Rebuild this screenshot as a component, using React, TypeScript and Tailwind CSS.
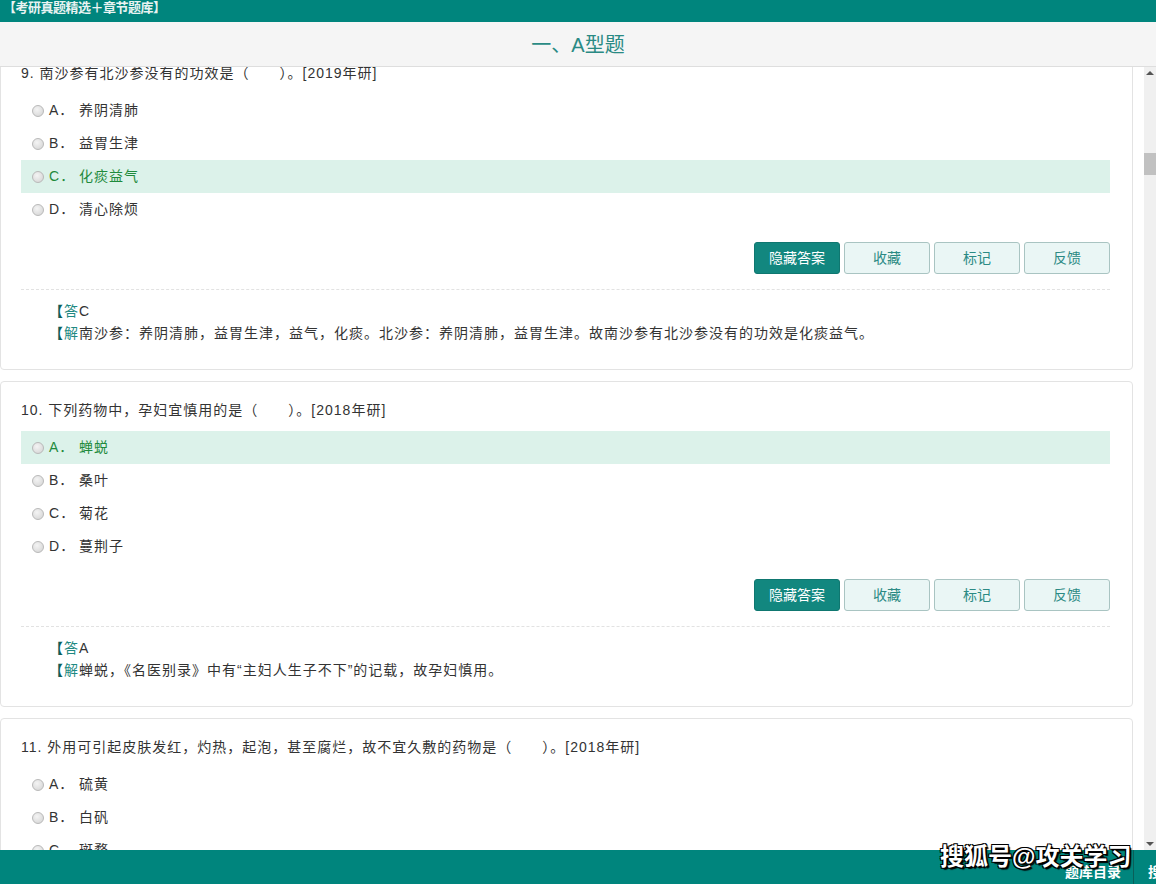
import React from "react";

type Q = {
  no: string;
  text: string;
  options: { k: string; t: string }[];
  correct: number;
  answer?: string;
  explain?: string;
};

const questions: Q[] = [
  {
    no: "9.",
    text: "南沙参有北沙参没有的功效是（　　）。[2019年研]",
    options: [
      { k: "A", t: "养阴清肺" },
      { k: "B", t: "益胃生津" },
      { k: "C", t: "化痰益气" },
      { k: "D", t: "清心除烦" },
    ],
    correct: 2,
    answer: "C",
    explain:
      "南沙参：养阴清肺，益胃生津，益气，化痰。北沙参：养阴清肺，益胃生津。故南沙参有北沙参没有的功效是化痰益气。",
  },
  {
    no: "10.",
    text: "下列药物中，孕妇宜慎用的是（　　）。[2018年研]",
    options: [
      { k: "A", t: "蝉蜕" },
      { k: "B", t: "桑叶" },
      { k: "C", t: "菊花" },
      { k: "D", t: "蔓荆子" },
    ],
    correct: 0,
    answer: "A",
    explain: "蝉蜕，《名医别录》中有“主妇人生子不下”的记载，故孕妇慎用。",
  },
  {
    no: "11.",
    text: "外用可引起皮肤发红，灼热，起泡，甚至腐烂，故不宜久敷的药物是（　　）。[2018年研]",
    options: [
      { k: "A", t: "硫黄" },
      { k: "B", t: "白矾" },
      { k: "C", t: "斑蝥" },
      { k: "D", t: "雄黄" },
    ],
    correct: -1,
  },
];

const font = { fontFamily: '"Liberation Sans", "Noto Sans CJK SC", sans-serif' };

function Radio() {
  return (
    <span className="inline-block w-[12px] h-[12px] rounded-full border border-[#b9b9b9] bg-[radial-gradient(circle_at_40%_35%,#f4f4f4,#d2d2d2)] shrink-0" />
  );
}

function Card({ q }: { q: Q }) {
  return (
    <div className="border border-[#e3e3e3] rounded-[4px] bg-white pt-[18px] pl-[20px] pr-[22px] pb-[25px] mb-[11px]">
      <div className="h-[20px] leading-[20px] text-[14px] text-[#333] tracking-[1px]">
        {q.no} {q.text}
      </div>
      <div className="mt-[11px]">
        {q.options.map((o, i) => (
          <div
            key={o.k}
            className={
              "h-[33px] flex items-center pl-[11px] text-[14px] tracking-[1px] " +
              (i === q.correct ? "bg-[#dcf2ea] text-[#1f8a3c]" : "text-[#333]")
            }
          >
            <Radio />
            <span className="ml-[5px] w-[30px]">{o.k}．</span>
            <span>{o.t}</span>
          </div>
        ))}
      </div>
      {q.answer && (
        <>
          <div className="mt-[16px] flex justify-end gap-[4px] h-[32px]">
            <button className="w-[86px] h-[32px] rounded-[3px] bg-[#12877f] text-white text-[14px] border border-[#0f7770]">
              隐藏答案
            </button>
            {["收藏", "标记", "反馈"].map((b) => (
              <button
                key={b}
                className="w-[86px] h-[32px] rounded-[3px] bg-[#eaf6f5] border border-[#a9c4c2] text-[#2b8a84] text-[14px]"
              >
                {b}
              </button>
            ))}
          </div>
          <div className="mt-[15px] border-t border-dashed border-[#e2e2e2] pt-[10px] pl-[28px] text-[14px] leading-[22px] text-[#333] tracking-[1px]">
            <div>
              <span className="text-[#0e5e59] font-bold">【</span>
              <span className="text-[#1f8a83]">答</span>
              {q.answer}
            </div>
            <div>
              <span className="text-[#0e5e59] font-bold">【</span>
              <span className="text-[#1f8a83]">解</span>
              {q.explain}
            </div>
          </div>
        </>
      )}
    </div>
  );
}

export default function App() {
  return (
    <div className="w-[1156px] h-[884px] overflow-hidden flex flex-col bg-white relative" style={font}>
      <div className="h-[22px] bg-[#00857d] text-[#e8f3f2] text-[13px] font-bold leading-[16px] px-[3px] shrink-0 tracking-[-0.5px]">
        【考研真题精选＋章节题库】
      </div>
      <div className="h-[45px] bg-[#f5f5f5] border-b border-[#dedede] flex items-center justify-center shrink-0">
        <span className="text-[20px] text-[#2a8a84] mt-[1px]">一、A型题</span>
      </div>
      <div className="flex-1 flex min-h-0">
        <div className="flex-1 overflow-hidden pr-[11px]">
          <div className="mt-[-23px]">
            {questions.map((q, i) => (
              <Card key={i} q={q} />
            ))}
          </div>
        </div>
        <div className="w-[12px] bg-[#f0f0f0] flex flex-col items-center relative">
          <div className="h-[12px] w-full flex items-center justify-center">
            <span className="w-0 h-0 border-l-[4px] border-r-[4px] border-b-[4px] border-l-transparent border-r-transparent border-b-[#555]" />
          </div>
          <div className="mt-[74px] w-full h-[22px] bg-[#c1c1c1]" />
          <div className="flex-1" />
          <div className="h-[12px] w-full flex items-center justify-center">
            <span className="w-0 h-0 border-l-[4px] border-r-[4px] border-t-[4px] border-l-transparent border-r-transparent border-t-[#555]" />
          </div>
        </div>
      </div>
      <div className="h-[34px] bg-[#00857d] shrink-0 flex items-center justify-end relative">
        <span className="text-white text-[14px] font-bold pr-[12px] mt-[10px]">题库目录</span>
        <span className="w-px h-full bg-[#0a5f59]" />
        <span className="text-white text-[14px] font-bold pl-[14px] mt-[10px] w-[22px] overflow-hidden whitespace-nowrap">搜索</span>
      </div>
      <div
        className="absolute left-[940px] top-[842px] text-[24px] font-bold text-white leading-[30px] whitespace-nowrap"
        style={{ textShadow: "1px 1px 0 #000, -1px -1px 0 #000, 1px -1px 0 #000, -1px 1px 0 #000, 2px 2px 1px #000" }}
      >
        搜狐号@攻关学习
      </div>
    </div>
  );
}
